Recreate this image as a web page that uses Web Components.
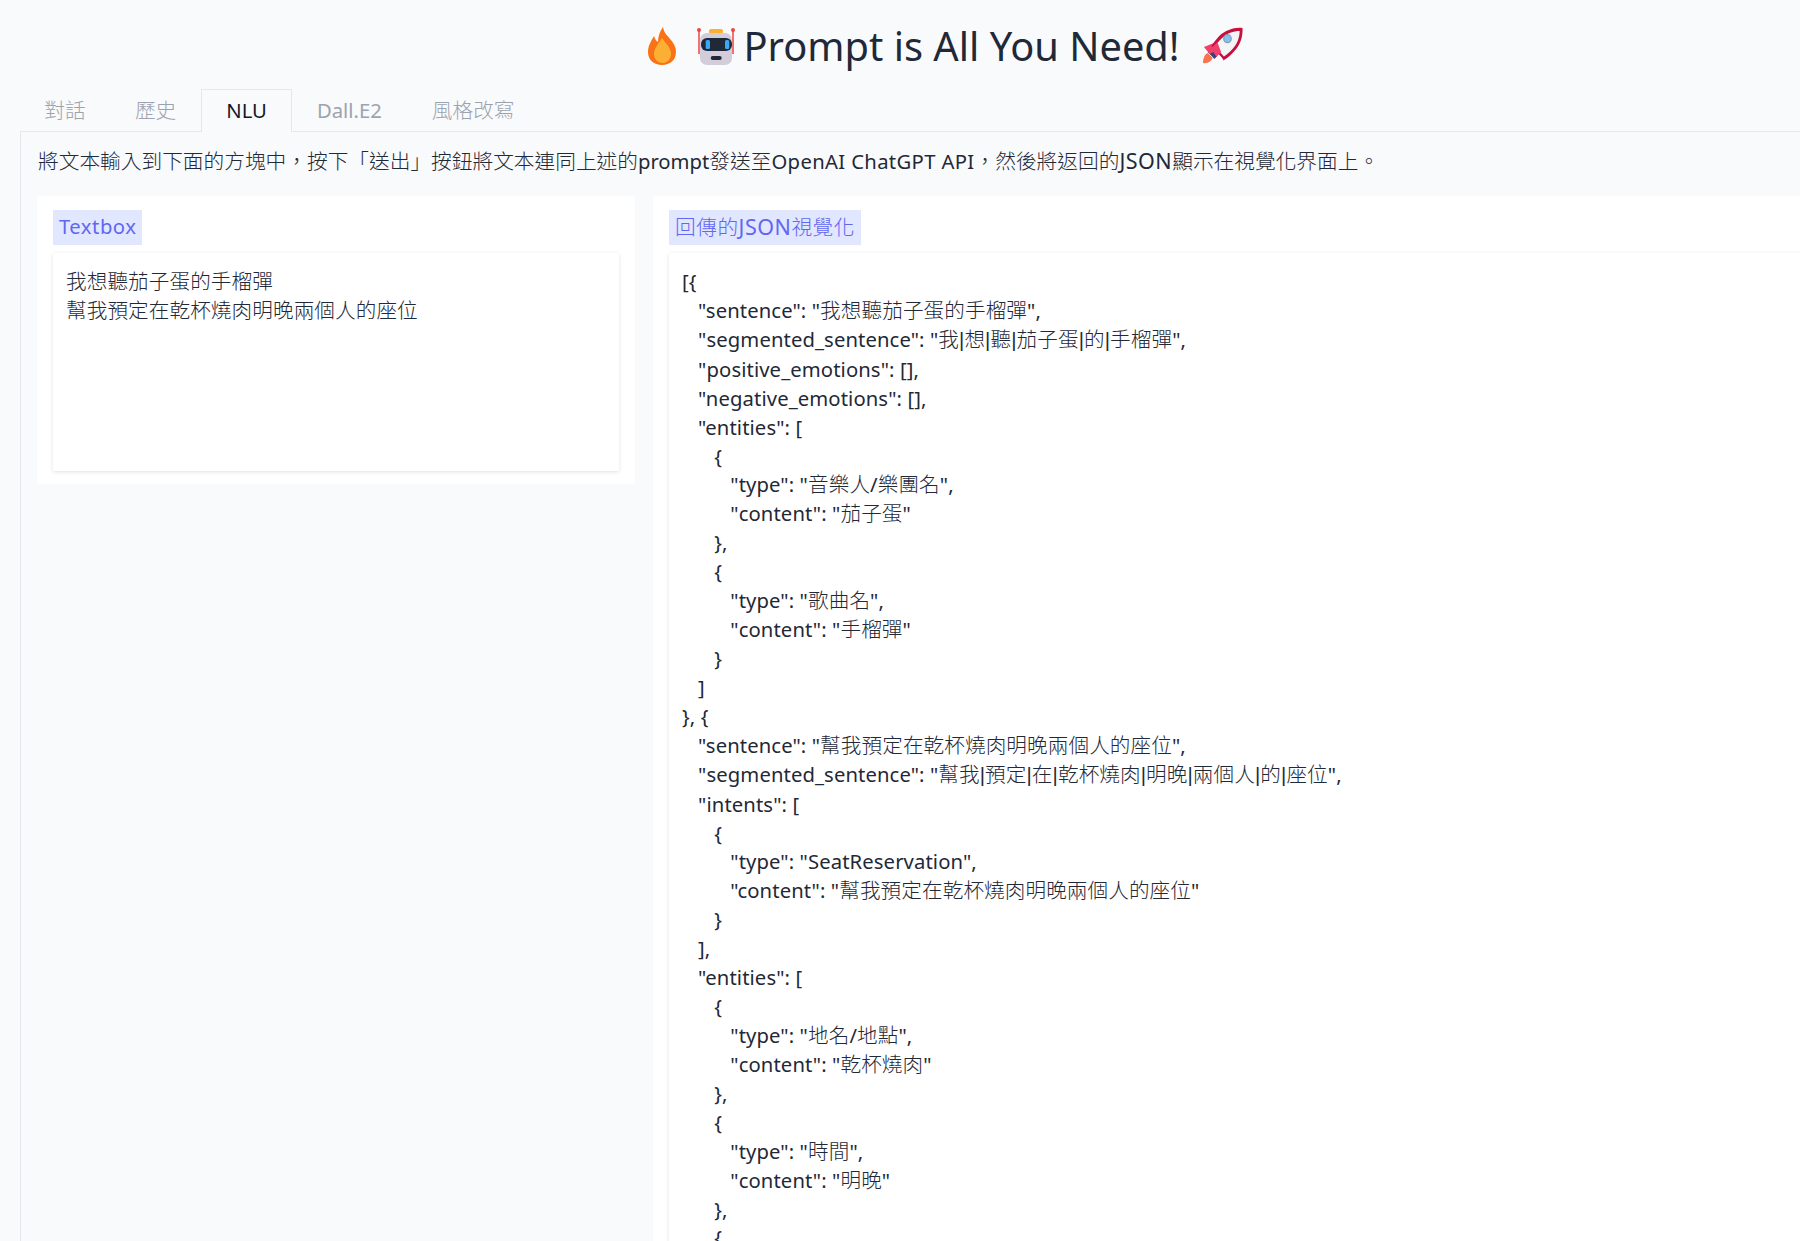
<!DOCTYPE html>
<html lang="zh-Hant">
<head>
<meta charset="utf-8">
<title>Prompt is All You Need!</title>
<style>
  html, body { margin: 0; height: 1241px; overflow: hidden; background: #f9fafb; }
  body {
    font-family: "Noto Sans", "Noto Sans CJK TC", sans-serif;
    font-size: 20.25px;
    line-height: 28.92px;
    color: #1f2937;
    text-spacing-trim: space-all;
  }
</style>
</head>
<body>
<prompt-app>
  <page-title slot="title">Prompt is All You Need!</page-title>
  <tab-bar slot="tabs" labels="對話,歷史,NLU,Dall.E2,風格改寫" active="2"></tab-bar>
  <tab-content slot="content">
    <mixed-text slot="desc">將文本輸入到下面的方塊中，按下「送出」按鈕將文本連同上述的prompt發送至OpenAI ChatGPT API，然後將返回的JSON顯示在視覺化界面上。</mixed-text>
    <text-panel slot="left" label="Textbox" rows="218"><mixed-text>我想聽茄子蛋的手榴彈
幫我預定在乾杯燒肉明晚兩個人的座位</mixed-text></text-panel>
    <text-panel slot="right" label="回傳的JSON視覺化"><mixed-text>[{
   "sentence": "我想聽茄子蛋的手榴彈",
   "segmented_sentence": "我|想|聽|茄子蛋|的|手榴彈",
   "positive_emotions": [],
   "negative_emotions": [],
   "entities": [
      {
         "type": "音樂人/樂團名",
         "content": "茄子蛋"
      },
      {
         "type": "歌曲名",
         "content": "手榴彈"
      }
   ]
}, {
   "sentence": "幫我預定在乾杯燒肉明晚兩個人的座位",
   "segmented_sentence": "幫我|預定|在|乾杯燒肉|明晚|兩個人|的|座位",
   "intents": [
      {
         "type": "SeatReservation",
         "content": "幫我預定在乾杯燒肉明晚兩個人的座位"
      }
   ],
   "entities": [
      {
         "type": "地名/地點",
         "content": "乾杯燒肉"
      },
      {
         "type": "時間",
         "content": "明晚"
      },
      {</mixed-text></text-panel>
  </tab-content>
</prompt-app>

<script>
// text with latin and chinese runs at their own sizes
class MixedText extends HTMLElement {
  constructor() {
    super();
    this.attachShadow({ mode: 'open' });
  }

  connectedCallback() {
    const text = this.textContent;
    this.textContent = '';
    const html = text.replace(/[\u3000-\u9fff\uff00-\uffef]+|\||JSON|OpenAI ChatGPT API/g, (run) => {
      if (run === '|') return '<span class="bar">|</span>';
      if (run === 'JSON') return '<span class="json">JSON</span>';
      if (run.startsWith('OpenAI')) return `<span class="api">${run}</span>`;
      return `<span class="cjk">${run}</span>`;
    });
    // no whitespace after the style: hosts may be white-space: pre-wrap
    this.shadowRoot.innerHTML = `<style>
        .cjk { font-size: var(--cjk-size, 20.7px); font-weight: 300; }
        .bar { font-family: "Liberation Sans", sans-serif; }
        .json { font-size: 21.5px; letter-spacing: 0.5px; }
        .api { letter-spacing: 0.35px; }
      </style>${html}`;
  }
}

// page shell, wider than the window like the original layout
class PromptApp extends HTMLElement {
  constructor() {
    super();
    this.attachShadow({ mode: 'open' }).innerHTML = `
      <style>
        :host { display: block; width: 1848px; margin-left: 20px; }
      </style>
      <slot name="title"></slot>
      <slot name="tabs"></slot>
      <slot name="content"></slot>
    `;
  }
}

class PageTitle extends HTMLElement {
  constructor() {
    super();
    this.attachShadow({ mode: 'open' }).innerHTML = `
      <style>
        :host {
          display: flex;
          align-items: center;
          justify-content: center;
          height: 89px;
          box-sizing: border-box;
          padding: 3px 0 0 3px;
          font-size: 39.8px;
          line-height: 56px;
          color: #1f2937;
        }
        svg { flex: none; display: block; }
        .flame { margin-right: 21px; }
        .robot { margin-right: 8px; }
        .rocket { margin-left: 23px; }
      </style>
      <svg class="flame" width="28" height="38" viewBox="0 0 28 38">
        <path fill="#f97316" d="M15 0C16 6 19 8 23 13C26 17 28 20 28 25C28 33 22 38 14 38C6 38 0 33 0 25C0 19 3 14 6 9C7 12 8 14 10 15C10 9 12 4 15 0z"/>
        <path fill="#fbb034" d="M14 11C17 16 23 20 23 27C23 32 19 36 14.5 36C10 36 6 32 6 27C6 21 11 16 14 11z"/>
      </svg>
      <svg class="robot" width="38" height="38" viewBox="0 0 38 38">
        <path fill="none" stroke="#ef4444" stroke-width="1.5" d="M2 3v24M36 3v24"/>
        <circle cx="2" cy="3" r="2" fill="#ef4444"/>
        <circle cx="36" cy="3" r="2" fill="#ef4444"/>
        <rect x="12" y="2" width="14" height="5" rx="2" fill="#fbb034"/>
        <rect x="3" y="6" width="32" height="32" rx="7" fill="#d3cddb"/>
        <rect x="4" y="11" width="31" height="13" rx="6" fill="#1f2937"/>
        <rect x="8.7" y="13" width="4.3" height="9" rx="1.5" fill="#38a9f5"/>
        <rect x="28" y="13" width="4.3" height="9" rx="1.5" fill="#38a9f5"/>
        <rect x="13.7" y="29" width="11" height="4" rx="2" fill="#1f2937"/>
      </svg>
      <slot></slot>
      <svg class="rocket" width="40" height="38" viewBox="0 0 42 38" preserveAspectRatio="none">
        <path fill="#f9734f" d="M0 36C0 31 2 27 5 26L10 31C9 34 5 37 0 36z"/>
        <path fill="#3b3f7a" d="M5 25L8 22L15 29L12 32z"/>
        <path fill="#f43f6b" d="M1 20L14 15L24 24L22 34L18 27L11 25L7 27z"/>
        <path fill="#c8103f" d="M41.5 1C33 0 24 3 17 9C14 12 11 16 9 19L22 33C26 31 30 27 33 24C39 18 42 10 41.5 1z"/>
        <path fill="#f3f4f6" d="M38.5 4C32 4 25 6 19 12C16 15 14 17 12.5 19.5L22 29.5C25 28 28 25 31 22C36 17 38.5 10 38.5 4z"/>
        <path fill="#f43f6b" d="M9 21L15 15L19 25L14 30z"/>
        <circle cx="25.7" cy="11.7" r="4.6" fill="#8a9aa8"/>
        <circle cx="25.7" cy="11.7" r="3.4" fill="#7cc4f5"/>
      </svg>
    `;
  }
}

class TabBar extends HTMLElement {
  constructor() {
    super();
    this.attachShadow({ mode: 'open' });
  }

  connectedCallback() {
    const labels = this.getAttribute('labels').split(',');
    const active = Number(this.getAttribute('active'));
    const buttons = labels.map((label, i) =>
      `<button class="${i === active ? 'on' : ''}"><mixed-text>${label}</mixed-text></button>`).join('');
    this.shadowRoot.innerHTML = `
      <style>
        :host {
          display: flex;
          height: 43px;
          box-sizing: border-box;
          border-bottom: 1px solid #e5e7eb;
        }
        button {
          height: 43px;
          box-sizing: border-box;
          padding: 0 24px 2px;
          border: 1px solid transparent;
          border-bottom: 0;
          background: transparent;
          color: #9ca3af;
          font: inherit;
        }
        button:nth-child(-n+2) { padding: 0 23.25px 2px; }
        .on {
          border-color: #e5e7eb;
          background: #f9fafb;
          color: #111827;
        }
      </style>
      ${buttons}
    `;
  }
}

class TabContent extends HTMLElement {
  constructor() {
    super();
    this.attachShadow({ mode: 'open' }).innerHTML = `
      <style>
        :host {
          display: block;
          box-sizing: border-box;
          height: 1109px;
          overflow: hidden;
          padding: 15px 17px 0 16px;
          border-left: 1px solid #e5e7eb;
        }
        .desc { height: 49px; padding-left: 1px; white-space: nowrap; }
        .row {
          display: grid;
          grid-template-columns: 598px 1fr;
          gap: 18px;
          align-items: start;
        }
      </style>
      <div class="desc"><slot name="desc"></slot></div>
      <div class="row">
        <slot name="left"></slot>
        <slot name="right"></slot>
      </div>
    `;
  }
}

class TextPanel extends HTMLElement {
  constructor() {
    super();
    this.attachShadow({ mode: 'open' });
  }

  connectedCallback() {
    const rows = this.getAttribute('rows');
    this.shadowRoot.innerHTML = `
      <style>
        :host {
          display: block;
          box-sizing: border-box;
          padding: 14px 16px 13px;
          background: #fff;
        }
        .label {
          display: inline-block;
          height: 35px;
          padding: 0 6px;
          line-height: 33px;
          letter-spacing: 0.5px;
          background: #e0e7ff;
          color: #6366f1;
        }
        .box {
          --cjk-size: 20.6px;
          display: block;
          box-sizing: border-box;
          margin-top: 8px;
          ${rows ? `height: ${rows}px;` : ''}
          padding: 14px 13px 12px;
          background: #fff;
          box-shadow: 0 1px 4px rgba(0, 0, 0, 0.12);
          letter-spacing: 0.1px;
          white-space: pre-wrap;
        }
      </style>
      <div><span class="label"><mixed-text>${this.getAttribute('label')}</mixed-text></span></div>
      <div class="box"><slot></slot></div>
    `;
  }
}

customElements.define('mixed-text', MixedText);
customElements.define('prompt-app', PromptApp);
customElements.define('page-title', PageTitle);
customElements.define('tab-bar', TabBar);
customElements.define('tab-content', TabContent);
customElements.define('text-panel', TextPanel);
</script>
</body>
</html>
